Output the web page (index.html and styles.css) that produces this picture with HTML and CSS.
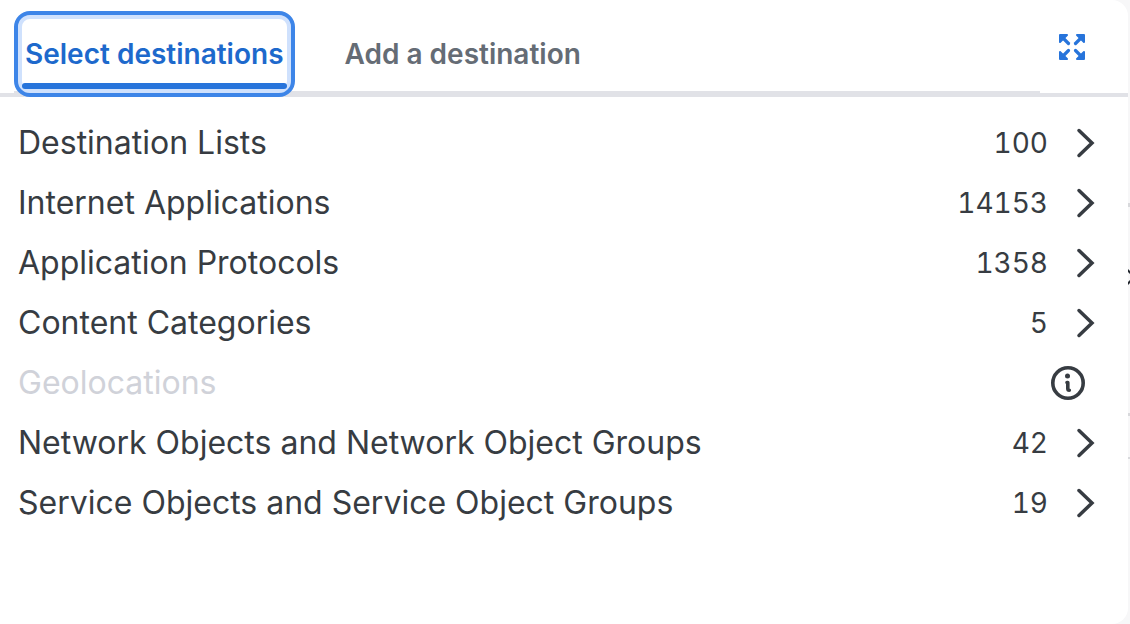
FILE: index.html
```html
<!DOCTYPE html>
<html lang="en">
<head>
<meta charset="utf-8">
<title>Select destinations</title>
<link rel="stylesheet" href="styles.css">
</head>
<body>
<svg class="defs" aria-hidden="true">
  <symbol id="chevron" viewBox="0 0 20 32"><path d="M3 3.500L16 16 3 28.500" fill="none" stroke="currentColor" stroke-width="3.500" stroke-linecap="round" stroke-linejoin="miter"/></symbol>
</svg>
<main class="panel">
  <header class="header">
    <div class="tabs" role="tablist">
      <button class="tab tab-active" role="tab" aria-selected="true">Select destinations</button>
      <button class="tab" role="tab" aria-selected="false">Add a destination</button>
    </div>
    <button class="expand" aria-label="Expand">
      <svg class="expand-icon" viewBox="0 0 26 26" aria-hidden="true">
        <g id="arrow" fill="currentColor" stroke="currentColor" stroke-linecap="round" stroke-linejoin="round">
          <path d="M4 4L9.500 9.500" stroke-width="3.200"/>
          <path d="M1 1H8L1 8Z" stroke-width="2"/>
        </g>
        <use href="#arrow" transform="rotate(90 13 13)"/>
        <use href="#arrow" transform="rotate(180 13 13)"/>
        <use href="#arrow" transform="rotate(270 13 13)"/>
      </svg>
    </button>
  </header>
  <ul class="list">
    <li><button class="row"><span class="name">Destination Lists</span><span class="count">100</span><svg class="chevron" aria-hidden="true"><use href="#chevron"/></svg></button></li>
    <li><button class="row"><span class="name">Internet Applications</span><span class="count">14153</span><svg class="chevron" aria-hidden="true"><use href="#chevron"/></svg></button></li>
    <li><button class="row"><span class="name">Application Protocols</span><span class="count">1358</span><svg class="chevron" aria-hidden="true"><use href="#chevron"/></svg></button></li>
    <li><button class="row"><span class="name">Content Categories</span><span class="count">5</span><svg class="chevron" aria-hidden="true"><use href="#chevron"/></svg></button></li>
    <li><button class="row row-disabled" disabled><span class="name">Geolocations</span><svg class="info" viewBox="0 0 36 36" aria-hidden="true"><circle cx="18" cy="18" r="15.200" fill="none" stroke="currentColor" stroke-width="3.600"/><circle cx="17.500" cy="11" r="2.500" fill="currentColor"/><path d="M17 17.500H17.800V23.500Q17.800 25.300 19.300 25.300" fill="none" stroke="currentColor" stroke-width="3.600" stroke-linecap="round" stroke-linejoin="round"/></svg></button></li>
    <li><button class="row"><span class="name">Network Objects and Network Object Groups</span><span class="count">42</span><svg class="chevron" aria-hidden="true"><use href="#chevron"/></svg></button></li>
    <li><button class="row"><span class="name">Service Objects and Service Object Groups</span><span class="count">19</span><svg class="chevron" aria-hidden="true"><use href="#chevron"/></svg></button></li>
  </ul>
</main>
<svg class="edge" viewBox="0 0 2 624" aria-hidden="true">
  <path d="M0 203H2V207H0ZM0 413H2V416H0ZM0 457H2V459H0Z" fill="#d8d9dc"/>
  <path d="M0 269L2 271V274L0 272ZM0 282L2 280V283L0 285Z" fill="#23282e"/>
</svg>
</body>
</html>
```

FILE: styles.css
```css
* {
  box-sizing: border-box;
}

body {
  margin: 0;
  min-height: 100vh;
  display: flex;
  position: relative;
  background: #f7f7f8;
  color: #373c42;
  font-family: Inter, "Liberation Sans", sans-serif;
}

button {
  margin: 0;
  padding: 0;
  border: 0;
  background: none;
  color: inherit;
  font: inherit;
}

.defs {
  position: absolute;
  width: 0;
  height: 0;
}

.panel {
  flex: 1;
  margin-right: 2px;
  background: #fff;
  border-radius: 0 16px 16px 0;
}

.header {
  display: flex;
  padding: 11px 0 0 14px;
  box-shadow: inset 0 -4px #e1e2e7;
}

.tabs {
  flex: 1;
  display: flex;
  gap: 40px;
  box-shadow: inset 0 -6px #e1e2e7;
}

.tab {
  height: 86px;
  padding: 0 10px;
  color: #656c75;
  font-size: 28px;
  font-weight: 600;
  line-height: 36px;
}

.tab-active {
  position: relative;
  color: #1d69cc;
  border: 4px solid #3d85e8;
  border-radius: 16px;
  padding: 0 7px;
  background: #fff;
  box-shadow: inset 0 0 0 4px #cfe1fd;
}

.tab-active::after {
  content: "";
  position: absolute;
  left: 4px;
  right: 4px;
  bottom: 4px;
  height: 6px;
  border-radius: 3px;
  background: #2774db;
}

.expand {
  width: 88px;
  height: 72px;
  padding-right: 24px;
  color: #2774db;
}

.expand-icon {
  display: block;
  width: 26px;
  height: 26px;
  margin: auto;
}

.list {
  list-style: none;
  margin: 0;
  padding: 16px 32px 0 18px;
}

.row {
  display: flex;
  align-items: center;
  width: 100%;
  height: 60px;
  text-align: left;
}

.name {
  flex: 1;
  font-size: 32px;
  line-height: 40px;
}

.count {
  font-size: 28px;
  line-height: 40px;
  font-variant-numeric: tabular-nums;
}

.chevron {
  width: 20px;
  height: 32px;
  margin-left: 28px;
}

.row-disabled {
  color: #d0d2d9;
}

.info {
  width: 36px;
  height: 36px;
  margin-right: 10px;
  color: #373c42;
}

.edge {
  position: absolute;
  top: 0;
  right: 0;
  width: 2px;
  height: 624px;
}
```
